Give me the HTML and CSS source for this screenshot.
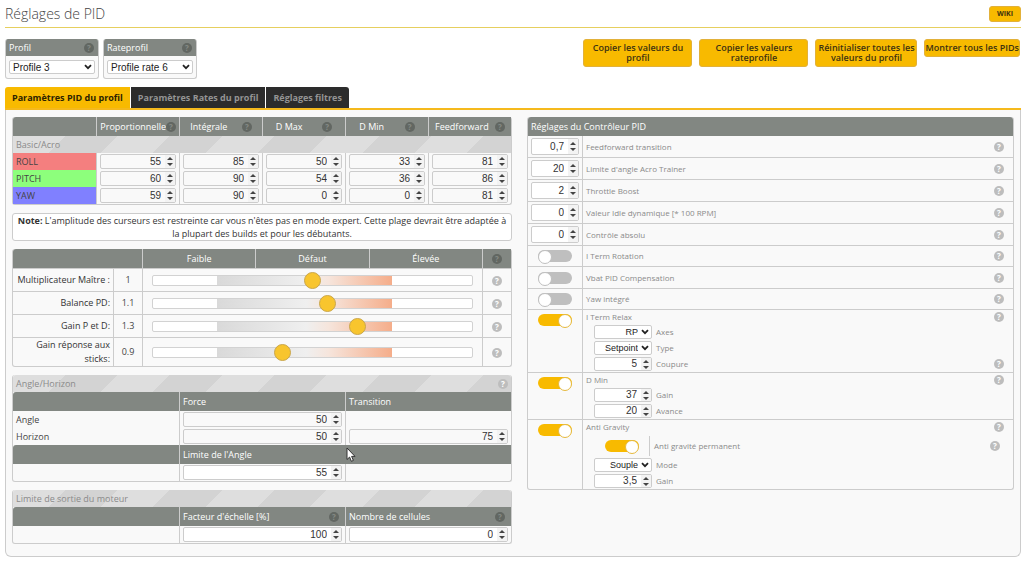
FILE: index.html
```html
<!DOCTYPE html>
<html lang="fr">
<head>
<meta charset="utf-8">
<title>Réglages de PID</title>
<link rel="stylesheet" href="styles.css">
</head>
<body>
<svg class="defs" aria-hidden="true"><symbol id="chev" viewBox="0 0 8 6"><path d="M1 1.2 4 4.2 7 1.2" fill="none" stroke="#222" stroke-width="1.8"/></symbol></svg>
<header class="head">
  <h1>Réglages de PID</h1>
  <a class="btn wiki" href="#">WIKI</a>
</header>
<div class="tools">
  <div class="profile"><label for="prof">Profil <span class="help dark">?</span></label>
    <div class="pick"><select id="prof"><option>Profile 3</option></select><svg><use href="#chev"/></svg></div></div>
  <div class="profile"><label for="rate">Rateprofil <span class="help dark">?</span></label>
    <div class="pick"><select id="rate"><option>Profile rate 6</option></select><svg><use href="#chev"/></svg></div></div>
  <div class="actions">
    <button class="btn wide">Copier les valeurs du profil</button>
    <button class="btn wide">Copier les valeurs rateprofile</button>
    <button class="btn mid">Réinitialiser toutes les valeurs du profil</button>
    <button class="btn">Montrer tous les PIDs</button>
  </div>
</div>
<nav class="tabs">
  <a class="on" href="#">Paramètres PID du profil</a>
  <a href="#">Paramètres Rates du profil</a>
  <a href="#">Réglages filtres</a>
</nav>
<main class="panel">
  <div class="left">
    <div class="box">
      <table class="pid">
        <tr class="bar"><th></th>
          <th><div>Proportionnelle<span class="help dark">?</span></div></th>
          <th><div>Intégrale<span class="help dark">?</span></div></th>
          <th><div>D Max<span class="help dark">?</span></div></th>
          <th><div>D Min<span class="help dark">?</span></div></th>
          <th><div>Feedforward<span class="help dark">?</span></div></th></tr>
        <tr class="stripe"><td colspan="6">Basic/Acro</td></tr>
        <tr><th class="roll">ROLL</th>
          <td><div class="num"><input aria-label="Roll P" value="55"><span></span></div></td>
          <td><div class="num"><input aria-label="Roll I" value="85"><span></span></div></td>
          <td><div class="num"><input aria-label="Roll D Max" value="50"><span></span></div></td>
          <td><div class="num"><input aria-label="Roll D Min" value="33"><span></span></div></td>
          <td><div class="num"><input aria-label="Roll F" value="81"><span></span></div></td></tr>
        <tr><th class="pitch">PITCH</th>
          <td><div class="num"><input aria-label="Pitch P" value="60"><span></span></div></td>
          <td><div class="num"><input aria-label="Pitch I" value="90"><span></span></div></td>
          <td><div class="num"><input aria-label="Pitch D Max" value="54"><span></span></div></td>
          <td><div class="num"><input aria-label="Pitch D Min" value="36"><span></span></div></td>
          <td><div class="num"><input aria-label="Pitch F" value="86"><span></span></div></td></tr>
        <tr><th class="yaw">YAW</th>
          <td><div class="num"><input aria-label="Yaw P" value="59"><span></span></div></td>
          <td><div class="num"><input aria-label="Yaw I" value="90"><span></span></div></td>
          <td><div class="num"><input aria-label="Yaw D Max" value="0"><span></span></div></td>
          <td><div class="num"><input aria-label="Yaw D Min" value="0"><span></span></div></td>
          <td><div class="num"><input aria-label="Yaw F" value="81"><span></span></div></td></tr>
      </table>
    </div>
    <p class="note"><b>Note:</b> L'amplitude des curseurs est restreinte car vous n'êtes pas en mode expert. Cette plage devrait être adaptée à la plupart des builds et pour les débutants.</p>
    <div class="box">
      <table class="sliders">
        <colgroup><col class="c-name"><col class="c-val"><col><col><col><col class="c-help"></colgroup>
        <tr class="bar"><th colspan="2"></th><th>Faible</th><th>Défaut</th><th>Élevée</th><th><span class="help dark">?</span></th></tr>
        <tr><th><label for="s1">Multiplicateur Maître :</label></th><td>1</td><td colspan="3"><input id="s1" type="range" value="50"></td><td><span class="help">?</span></td></tr>
        <tr><th><label for="s2">Balance PD:</label></th><td>1.1</td><td colspan="3"><input id="s2" type="range" value="55"></td><td><span class="help">?</span></td></tr>
        <tr><th><label for="s3">Gain P et D:</label></th><td>1.3</td><td colspan="3"><input id="s3" type="range" value="65"></td><td><span class="help">?</span></td></tr>
        <tr><th><label for="s4">Gain réponse aux sticks:</label></th><td>0.9</td><td colspan="3"><input id="s4" type="range" value="40"></td><td><span class="help">?</span></td></tr>
      </table>
    </div>
    <div class="box">
      <table class="thirds">
        <tr class="stripe"><td colspan="3"><div>Angle/Horizon<span class="help">?</span></div></td></tr>
        <tr class="bar"><th></th><th>Force</th><th>Transition</th></tr>
        <tr><th>Angle</th><td><div class="num"><input aria-label="Angle force" value="50"><span></span></div></td><td></td></tr>
        <tr><th>Horizon</th><td><div class="num"><input aria-label="Horizon force" value="50"><span></span></div></td><td><div class="num"><input aria-label="Horizon transition" value="75"><span></span></div></td></tr>
        <tr class="bar"><th></th><th>Limite de l'Angle</th><th class="plain"></th></tr>
        <tr><th></th><td><div class="num white"><input aria-label="Limite de l'Angle" value="55"><span></span></div></td><td></td></tr>
      </table>
      <svg class="cursor" viewBox="0 0 10 16" aria-hidden="true"><path d="M1 1v11.5l2.6-2.4 1.8 4.2 2-.9-1.8-4h3.4z" fill="#fff" stroke="#333" stroke-width="1"/></svg>
    </div>
    <div class="box">
      <table class="thirds">
        <tr class="stripe"><td colspan="3">Limite de sortie du moteur</td></tr>
        <tr class="bar"><th></th><th><div>Facteur d'échelle [%]<span class="help dark">?</span></div></th><th><div>Nombre de cellules<span class="help dark">?</span></div></th></tr>
        <tr><th></th><td><div class="num white"><input aria-label="Facteur d'échelle" value="100"><span></span></div></td><td><div class="num white"><input aria-label="Nombre de cellules" value="0"><span></span></div></td></tr>
      </table>
    </div>
  </div>
  <section class="box settings">
    <h2>Réglages du Contrôleur PID</h2>
    <div class="row tall"><div class="num white"><input id="r1" value="0,7"><span></span></div><div class="text"><label for="r1">Feedforward transition</label><span class="help">?</span></div></div>
    <div class="row tall"><div class="num white"><input id="r2" value="20"><span></span></div><div class="text"><label for="r2">Limite d'angle Acro Trainer</label><span class="help">?</span></div></div>
    <div class="row tall"><div class="num white"><input id="r3" value="2"><span></span></div><div class="text"><label for="r3">Throttle Boost</label><span class="help">?</span></div></div>
    <div class="row tall"><div class="num white"><input id="r4" value="0"><span></span></div><div class="text"><label for="r4">Valeur Idle dynamique [* 100 RPM]</label><span class="help">?</span></div></div>
    <div class="row tall"><div class="num white"><input id="r5" value="0"><span></span></div><div class="text"><label for="r5">Contrôle absolu</label><span class="help">?</span></div></div>
    <div class="row"><input class="toggle" type="checkbox" id="t1"><div class="text"><label for="t1">I Term Rotation</label><span class="help">?</span></div></div>
    <div class="row tall"><input class="toggle" type="checkbox" id="t2"><div class="text"><label for="t2">Vbat PID Compensation</label><span class="help">?</span></div></div>
    <div class="row"><input class="toggle" type="checkbox" id="t3"><div class="text"><label for="t3">Yaw intégré</label><span class="help">?</span></div></div>
    <div class="row group"><input class="toggle" type="checkbox" id="t4" checked><div class="text">
      <div class="line"><label for="t4">I Term Relax</label><span class="help">?</span></div>
      <div class="line sub"><div class="pick"><select id="g1"><option>RP</option></select><svg><use href="#chev"/></svg></div><label for="g1">Axes</label></div>
      <div class="line sub"><div class="pick"><select id="g2"><option>Setpoint</option></select><svg><use href="#chev"/></svg></div><label for="g2">Type</label></div>
      <div class="line sub"><div class="num white"><input id="g3" value="5"><span></span></div><label for="g3">Coupure</label><span class="help">?</span></div>
    </div></div>
    <div class="row group"><input class="toggle" type="checkbox" id="t5" checked><div class="text">
      <div class="line"><label for="t5">D Min</label><span class="help">?</span></div>
      <div class="line sub"><div class="num white"><input id="g4" value="37"><span></span></div><label for="g4">Gain</label></div>
      <div class="line sub"><div class="num white"><input id="g5" value="20"><span></span></div><label for="g5">Avance</label></div>
    </div></div>
    <div class="row group"><input class="toggle" type="checkbox" id="t6" checked><div class="text">
      <div class="line"><label for="t6">Anti Gravity</label><span class="help">?</span></div>
      <div class="line perm"><input class="toggle" type="checkbox" id="t7" checked><label for="t7">Anti gravité permanent</label><span class="help">?</span></div>
      <div class="line sub"><div class="pick"><select id="g6"><option>Souple</option></select><svg><use href="#chev"/></svg></div><label for="g6">Mode</label></div>
      <div class="line sub"><div class="num white"><input id="g7" value="3,5"><span></span></div><label for="g7">Gain</label></div>
    </div></div>
  </section>
</main>
</body>
</html>
```
FILE: styles.css
```css
* { box-sizing: border-box; }
body { margin: 0; padding: 0 3px 0 5px; background: #fff; color: #444; font: 9px/12px "Open Sans", "Noto Sans", sans-serif; }
h1, h2, p { margin: 0; }
a { text-decoration: none; }
.defs { display: none; }
.head { display: flex; justify-content: space-between; align-items: center; height: 28px; border-bottom: 1px solid #e6cf5e; }
h1 { font-size: 14px; line-height: 20px; font-weight: 300; color: #444; }
.btn { border: 1px solid #e2b13a; border-radius: 3px; background: #f8ba00; color: #3d3210; font: 600 9px/10px "Open Sans", "Noto Sans", sans-serif; text-align: center; padding: 3px 0; }
.wiki { font-weight: 700; font-size: 7px; line-height: 8px; padding: 3px 7px; }
.tools { display: flex; align-items: flex-start; gap: 4px; padding: 11px 1px 8px 0; }
.profile { width: 94px; border: 1px solid #ccc; border-top: 0; border-radius: 3px; overflow: hidden; background: #f9f9f9; }
.profile label { display: flex; justify-content: space-between; align-items: center; height: 17px; padding: 0 4px 0 3px; background: #828782; color: #fff; }
.profile .pick { margin: 4px 3px; height: 14px; }
.profile select { font-size: 10px; padding-left: 3px; }
.actions { display: flex; gap: 7px; align-items: flex-start; margin-left: auto; }
.wide { width: 109px; padding: 3px 8px; }
.mid { width: 102px; }
.help { flex: none; display: inline-block; width: 10px; height: 10px; border-radius: 50%; background: #bdbdbd; color: #fff; font-size: 8px; line-height: 10px; font-weight: 700; text-align: center; }
.help.dark { background: #626762; color: #858a85; }
.pick { display: grid; }
.pick select, .pick svg { grid-area: 1 / 1; }
.pick select { appearance: none; width: 100%; min-width: 0; margin: 0; border: 1px solid #ccc; border-radius: 2px; background: #fff; color: #222; font-family: "Liberation Sans", Arial, sans-serif; outline: 0; }
.pick svg { width: 8px; height: 6px; margin-right: 3px; justify-self: end; align-self: center; pointer-events: none; }
.tabs { display: flex; gap: 1px; height: 23px; border-bottom: 2px solid #f5b91d; }
.tabs a { padding: 0 7px; line-height: 21px; font-weight: 700; background: #2c2c2c; color: #949494; }
.tabs .on { background: #f8ba00; color: #2b2200; border-top-left-radius: 3px; }
.tabs a:last-child { border-top-right-radius: 3px; }
.panel { display: grid; grid-template-columns: 500fr 487fr; gap: 15px; align-items: start; padding: 7px 6px 12px; border: 1px solid #ccc; border-top: 0; border-radius: 0 0 6px 6px; background: #f9f9f9; }
.left { display: flex; flex-direction: column; gap: 8px; min-width: 0; }
.box { position: relative; border: 1px solid #ccc; border-top: 0; border-radius: 3px; }
table { width: 100%; table-layout: fixed; border-spacing: 0; }
th, td { padding: 0 3px; height: 17px; text-align: left; font-weight: 400; }
td { border-left: 1px solid #ccc; }
.bar th { height: 19px; background: #828782; color: #fff; border-left: 1px solid #ccc; }
.bar th:first-child { border-left: 0; border-top-left-radius: 3px; }
.bar .plain { border-left-color: #828782; }
.bar th > div, .stripe td > div { display: flex; justify-content: space-between; align-items: center; }
.thirds .bar div { padding-right: 3px; }
.stripe td { height: 17px; border: 0; color: #8a8a8a; background: repeating-linear-gradient(135deg, #dedede 0 37px, #d3d3d3 37px 74px); border-radius: 3px 3px 0 0; }
.pid .stripe td { border-radius: 0; }
.pid .bar div { justify-content: flex-end; }
.pid .bar th:nth-child(n+3) div { justify-content: space-around; }
.roll { background: #f47f7f; }
.pitch { background: #8dff7c; }
.yaw { background: #8080ff; }
.num { display: flex; height: 15px; border: 1px solid #ccc; border-radius: 2px; background: #f9f9f9; overflow: hidden; }
.white { background: #fff; }
.num input { flex: 1; width: 0; min-width: 0; border: 0; padding: 0 4px 0 0; background: none; text-align: right; color: #333; font: 10px/12px "Liberation Sans", Arial, sans-serif; outline: 0; }
.num span { display: flex; flex-direction: column; justify-content: center; align-items: center; gap: 3px; width: 10px; background: #f3f3f3; }
.num span::before, .num span::after { content: ""; border: 3px solid transparent; border-top-width: 0; border-bottom-color: #444; }
.num span::after { border-top: 3px solid #444; border-bottom: 0; }
.note { padding: 0 1px; border: 1px solid #ccc; border-radius: 3px; background: #fff; text-align: center; line-height: 13px; color: #333; }
.c-name { width: 100px; }
.c-val, .c-help { width: 29px; }
.sliders th, .sliders td { text-align: center; }
.sliders tr:not(.bar) > * { height: 23px; border-top: 1px solid #ccc; }
.sliders tr:not(.bar) th { padding-left: 0; text-align: right; color: #333; line-height: 14px; }
.sliders td[colspan] { padding: 0 9px; }
.sliders .help { vertical-align: middle; }
input[type=range] { appearance: none; display: block; width: 100%; height: 17px; margin: 0; background: none; }
input[type=range]::-webkit-slider-runnable-track { height: 11px; border: 1px solid #d2d2d2; border-radius: 2px; background: linear-gradient(90deg, #fff 20%, #d9d9d9 20%, #efefef 48%, #f6e5dc 55%, #f5ad8a 75%, #fff 75%); }
input[type=range]::-webkit-slider-thumb { appearance: none; width: 17px; height: 17px; margin-top: -4px; border: 1px solid #c9a64c; border-radius: 50%; background: #f8c52e; }
.cursor { position: absolute; left: 333px; top: 72px; width: 10px; height: 16px; }
.settings h2 { height: 19px; padding: 0 3px; background: #828782; color: #fff; font-size: 9px; line-height: 19px; font-weight: 400; border-radius: 3px 3px 0 0; }
.row { display: grid; grid-template-columns: 54px 1fr; align-items: center; height: 21px; color: #8a8a8a; font-size: 8px; border-bottom: 1px solid #ccc; }
.row:last-child { border-bottom: 0; }
.row > .num { margin: 0 3px; height: 17px; }
.tall { height: 22px; }
.text { display: flex; align-items: center; justify-content: space-between; align-self: stretch; padding: 0 9px 0 3px; border-left: 1px solid #ccc; }
.toggle { appearance: none; width: 34px; height: 12px; margin: 0; border-radius: 6px; background: #bfbfbf; display: flex; }
.toggle::before { content: ""; width: 12px; height: 12px; border: 1px solid #bfbfbf; border-radius: 50%; background: #fff; }
.toggle:checked { background: #f8ba00; justify-content: flex-end; }
.toggle:checked::before { border-color: #e5b93e; }
.row > .toggle { justify-self: center; }
.group { height: auto; }
.group > .toggle { align-self: start; margin-top: 4px; }
.group .text { flex-direction: column; align-items: stretch; gap: 2px; padding-top: 1px; padding-bottom: 1px; }
.line { display: flex; align-items: center; }
.line .help { margin-left: auto; }
.sub { padding-left: 8px; gap: 4px; }
.sub .pick, .sub .num { width: 58px; height: 14px; }
.sub select { font-size: 9px; text-align: right; text-align-last: right; padding-right: 13px; padding-left: 0; }
.perm { height: 21px; padding: 0 4px 0 19px; }
.perm label { margin-left: 10px; padding-left: 4px; line-height: 20px; border-left: 1px solid #ccc; }
```
